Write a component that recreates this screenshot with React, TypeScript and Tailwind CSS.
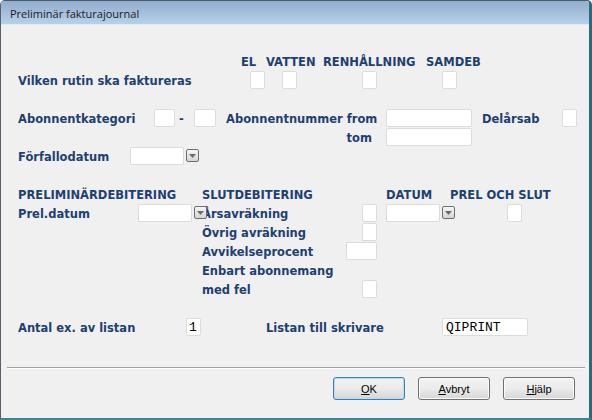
import React from "react";

const lbl = "shrink-0 whitespace-nowrap text-[11.5px] font-bold leading-[20px] text-[#1d4072]";

function Field({ className = "", children }: { className?: string; children?: React.ReactNode }) {
  return (
    <div
      className={`h-[18px] shrink-0 rounded-[2px] border border-[#dcdcdc] bg-white ${className}`}
    >
      {children}
    </div>
  );
}

function Drop({ className = "" }: { className?: string }) {
  return (
    <div
      className={`mt-[2px] flex h-[13px] w-[13px] shrink-0 items-center justify-center rounded-[2px] border border-[#6f6f6f] bg-linear-to-b from-[#f7f7f7] to-[#d4d4d4] ${className}`}
    >
      <svg width="7" height="4" viewBox="0 0 7 4">
        <path d="M0 0h7L3.5 4z" fill="#6b6b6b" />
      </svg>
    </div>
  );
}

function Btn({ children, primary }: { children: React.ReactNode; primary?: boolean }) {
  return (
    <button
      className={`flex h-[23px] w-[72px] items-center justify-center rounded-[3px] border bg-linear-to-b from-[#f3f3f3] via-[#ebebeb] to-[#d6d6d6] pt-px font-['Liberation_Sans',sans-serif] text-[11px] text-black ${
        primary
          ? "border-[#3c7fb1] shadow-[inset_0_0_0_1px_#b4dcf3]"
          : "border-[#707070] shadow-[inset_0_0_0_1px_#fbfbfb]"
      }`}
    >
      {children}
    </button>
  );
}

export default function App() {
  return (
    <div className="h-[420px] w-[592px] overflow-hidden font-['DejaVu_Sans',sans-serif]">
      <div className="flex h-full w-full flex-col rounded-t-[5px] border-t border-l border-r-[3px] border-b-[2px] border-t-[#4a5868] border-l-[#56606c] border-r-[#2c6a7b] border-b-[#3a8595] bg-[#f0f0f0]">
        {/* Title bar */}
        <div className="flex h-[23px] shrink-0 items-center rounded-t-[4px] bg-linear-to-b from-[#90adcd] to-[#b8d1ea] pl-[9px] pt-[4px] font-['Open_Sans',sans-serif] text-[11px] text-[#1a1a1a]">
          Preliminär fakturajournal
        </div>
        <div className="h-px shrink-0 bg-[#dfe8f1]" />

        {/* Form */}
        <div className="flex flex-col pl-[17px] pt-[27px]">
          {/* headers */}
          <div className="flex h-[19px] items-start">
            <span className="w-[223px] shrink-0" />
            <span className={`${lbl} w-[25px]`}>EL</span>
            <span className={`${lbl} w-[57px]`}>VATTEN</span>
            <span className={`${lbl} w-[103px]`}>RENHÅLLNING</span>
            <span className={lbl}>SAMDEB</span>
          </div>
          <div className="flex h-[19px] items-start">
            <span className={`${lbl} w-[232px]`}>Vilken rutin ska faktureras</span>
            <Field className="w-[15px] border-[#aac0d6]" />
            <Field className="ml-[17px] w-[15px]" />
            <Field className="ml-[65px] w-[15px]" />
            <Field className="ml-[65px] w-[15px]" />
          </div>
          <div className="h-[19px]" />
          <div className="flex h-[19px] items-start">
            <span className={`${lbl} w-[136px]`}>Abonnentkategori</span>
            <Field className="w-[21px]" />
            <span className={`${lbl} w-[19px] pl-[4px]`}>-</span>
            <Field className="w-[22px]" />
            <span className={`${lbl} ml-[10px] w-[160px]`}>Abonnentnummer from</span>
            <Field className="w-[86px]" />
            <span className={`${lbl} ml-[10px] w-[80px]`}>Delårsab</span>
            <Field className="w-[15px]" />
          </div>
          <div className="flex h-[19px] items-start">
            <span className={`${lbl} w-[368px] pr-[14px] text-right`}>tom</span>
            <Field className="w-[86px]" />
          </div>
          <div className="flex h-[19px] items-start">
            <span className={`${lbl} w-[112px]`}>Förfallodatum</span>
            <Field className="w-[54px]" />
            <Drop className="ml-[2px]" />
          </div>
          <div className="h-[19px]" />
          <div className="flex h-[19px] items-start">
            <span className={`${lbl} w-[184px]`}>PRELIMINÄRDEBITERING</span>
            <span className={`${lbl} w-[184px]`}>SLUTDEBITERING</span>
            <span className={`${lbl} w-[64px]`}>DATUM</span>
            <span className={lbl}>PREL OCH SLUT</span>
          </div>
          <div className="flex h-[19px] items-start">
            <span className={`${lbl} w-[120px]`}>Prel.datum</span>
            <Field className="w-[54px]" />
            <Drop className="relative z-10 ml-[2px]" />
            <span className={`${lbl} ml-[-5px] w-[160px]`}>Årsavräkning</span>
            <Field className="w-[15px]" />
            <Field className="ml-[9px] w-[54px]" />
            <Drop className="ml-[2px]" />
            <Field className="ml-[52px] w-[15px]" />
          </div>
          <div className="flex h-[19px] items-start">
            <span className="w-[184px] shrink-0" />
            <span className={`${lbl} w-[160px]`}>Övrig avräkning</span>
            <Field className="w-[15px]" />
          </div>
          <div className="flex h-[19px] items-start">
            <span className="w-[184px] shrink-0" />
            <span className={`${lbl} w-[144px]`}>Avvikelseprocent</span>
            <Field className="w-[31px]" />
          </div>
          <div className="flex h-[19px] items-start">
            <span className="w-[184px] shrink-0" />
            <span className={lbl}>Enbart abonnemang</span>
          </div>
          <div className="flex h-[19px] items-start">
            <span className="w-[184px] shrink-0" />
            <span className={`${lbl} w-[160px]`}>med fel</span>
            <Field className="w-[15px]" />
          </div>
          <div className="h-[19px]" />
          <div className="flex h-[19px] items-start">
            <span className={`${lbl} w-[168px]`}>Antal ex. av listan</span>
            <Field className="w-[15px] pl-[2px] font-['Liberation_Mono',monospace] text-[13px] leading-[17px] text-black">
              1
            </Field>
            <span className={`${lbl} ml-[65px] w-[176px]`}>Listan till skrivare</span>
            <Field className="w-[86px] pl-[3px] font-['Liberation_Mono',monospace] text-[13px] leading-[17px] text-black">
              QIPRINT
            </Field>
          </div>
        </div>

        {/* separator */}
        <div className="ml-[6px] mt-[30px] h-px w-[578px] bg-[#a0a0a0]" />
        <div className="ml-[6px] h-px w-[578px] bg-white" />

        {/* buttons */}
        <div className="mt-[8px] flex gap-[13px] pl-[332px]">
          <Btn primary>
            <span className="underline">O</span>K
          </Btn>
          <Btn>
            <span className="underline">A</span>vbryt
          </Btn>
          <Btn>
            <span className="underline">H</span>jälp
          </Btn>
        </div>
      </div>
    </div>
  );
}
